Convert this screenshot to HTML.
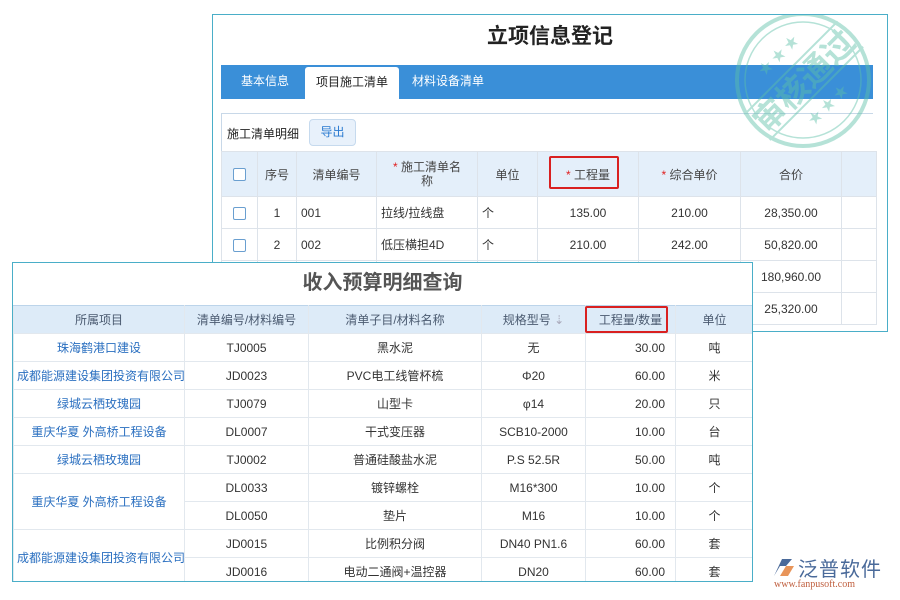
<!DOCTYPE html>
<html><head><meta charset="utf-8"><style>
*{margin:0;padding:0;box-sizing:border-box}
body{width:900px;height:600px;background:#fff;position:relative;overflow:hidden;font-family:"Liberation Sans","Noto Sans CJK SC",sans-serif;font-size:12px;color:#333}
.abs{position:absolute}
#top{left:212px;top:14px;width:676px;height:318px;border:1px solid #4aaec8;background:#fff;overflow:hidden}
#top .title{position:absolute;left:0;right:0;top:5px;text-align:center;font-size:21px;font-weight:bold;color:#222}
.tabs{position:absolute;left:8px;top:50px;width:652px;height:34px;background:#3a8fd8}
.tabs span{position:absolute;top:0;height:34px;line-height:32px;color:#fff;font-size:12px}
.tabs .act{background:#fff;color:#222;top:2px;height:32px;line-height:30px;border-radius:3px 3px 0 0;text-align:center}
.grid{position:absolute;left:8px;top:98px;width:652px;height:230px;border:1px solid #c8d8e8;border-right:none}
table{border-collapse:collapse;table-layout:fixed}
td{border:1px solid #dde3ea;text-align:center;white-space:nowrap;overflow:hidden}
.t1 td{height:32px}
.t1 tr.h td{background:#e4effa;height:45px;color:#444}
.cb{display:inline-block;width:13px;height:13px;border:1px solid #6a9fd0;border-radius:2px;vertical-align:middle;background:#fff}
.red{color:#e02020}
#bot{left:12px;top:262px;width:741px;height:320px;border:1px solid #4aaec8;background:#fff;overflow:hidden}
#bot .title{position:absolute;left:0;right:0;top:3px;text-align:center;font-size:20px;font-weight:bold;color:#555}
.t2{position:absolute;left:0;top:42px}
.t2 td{height:28px;border-color:#e2e8ee}
.t2 tr.h td{background:#ddebf8;height:28px;color:#4a5a70;border-top:1px solid #bcd4ea}
.lnk{color:#2a6fc0}
.rbox{position:absolute;border:2px solid #d92020;border-radius:2px}
</style></head><body>
<div id="top" class="abs">
 <div class="title">立项信息登记</div>
 <div class="tabs">
  <span style="left:20px">基本信息</span>
  <span class="act" style="left:84px;width:94px">项目施工清单</span>
  <span style="left:191px">材料设备清单</span>
 </div>
 <div class="grid">
  <div style="position:absolute;left:5px;top:11px;font-size:12px;color:#222">施工清单明细</div>
  <div style="position:absolute;left:87px;top:5px;width:47px;height:27px;border:1px solid #c6daee;border-radius:4px;background:#e8f1fb;color:#2a7ad0;text-align:center;line-height:25px">导出</div>
  <table class="t1" style="position:absolute;left:-1px;top:37px;width:655px">
   <colgroup><col style="width:36px"><col style="width:39px"><col style="width:80px"><col style="width:101px"><col style="width:60px"><col style="width:101px"><col style="width:102px"><col style="width:101px"><col style="width:35px"></colgroup>
   <tr class="h"><td><span class="cb"></span></td><td>序号</td><td>清单编号</td><td style="line-height:14px"><span class="red">*</span> 施工清单名<br>称</td><td>单位</td><td><span class="red">*</span> 工程量</td><td><span class="red">*</span> 综合单价</td><td>合价</td><td></td></tr>
   <tr><td><span class="cb"></span></td><td>1</td><td style="text-align:left;padding-left:4px">001</td><td style="text-align:left;padding-left:4px">拉线/拉线盘</td><td style="text-align:left;padding-left:4px">个</td><td>135.00</td><td>210.00</td><td>28,350.00</td><td></td></tr>
   <tr><td><span class="cb"></span></td><td>2</td><td style="text-align:left;padding-left:4px">002</td><td style="text-align:left;padding-left:4px">低压横担4D</td><td style="text-align:left;padding-left:4px">个</td><td>210.00</td><td>242.00</td><td>50,820.00</td><td></td></tr>
   <tr><td></td><td></td><td></td><td></td><td></td><td></td><td></td><td>180,960.00</td><td></td></tr>
   <tr><td></td><td></td><td></td><td></td><td></td><td></td><td></td><td>25,320.00</td><td></td></tr>
  </table>
 </div>
 <div class="rbox" style="left:336px;top:141px;width:70px;height:33px"></div>
 <svg style="position:absolute;left:510px;top:-10px" width="160" height="150" viewBox="0 0 160 150" opacity="0.45">
  <circle cx="80" cy="75" r="66" fill="none" stroke="#5cc0a8" stroke-width="4"/>
  <circle cx="80" cy="75" r="58" fill="none" stroke="#5cc0a8" stroke-width="1.5"/>
  <g transform="rotate(-45 80 75)">
   <line x1="14" y1="58" x2="146" y2="58" stroke="#5cc0a8" stroke-width="2"/>
   <line x1="14" y1="94" x2="146" y2="94" stroke="#5cc0a8" stroke-width="2"/>
   <text x="80" y="88" text-anchor="middle" font-size="32" font-weight="bold" fill="#5cc0a8" font-family="Noto Sans CJK SC,sans-serif">审核通过</text>
   <text x="80" y="45" text-anchor="middle" font-size="14" fill="#5cc0a8">★ ★ ★</text>
   <text x="80" y="115" text-anchor="middle" font-size="14" fill="#5cc0a8">★ ★ ★</text>
  </g>
 </svg>
</div>
<div id="bot" class="abs">
 <div class="title">收入预算明细查询</div>
 <table class="t2" style="width:740px">
  <colgroup><col style="width:171px"><col style="width:124px"><col style="width:173px"><col style="width:104px"><col style="width:90px"><col style="width:78px"></colgroup>
  <tr class="h"><td>所属项目</td><td>清单编号/材料编号</td><td>清单子目/材料名称</td><td>规格型号 <span style="color:#aab">⇣</span></td><td>工程量/数量</td><td>单位</td></tr>
  <tr><td class="lnk">珠海鹤港口建设</td><td>TJ0005</td><td>黑水泥</td><td>无</td><td style="text-align:right;padding-right:10px">30.00</td><td>吨</td></tr>
  <tr><td class="lnk" style="text-align:left;padding-left:3px">成都能源建设集团投资有限公司</td><td>JD0023</td><td>PVC电工线管杯梳</td><td>Φ20</td><td style="text-align:right;padding-right:10px">60.00</td><td>米</td></tr>
  <tr><td class="lnk">绿城云栖玫瑰园</td><td>TJ0079</td><td>山型卡</td><td>φ14</td><td style="text-align:right;padding-right:10px">20.00</td><td>只</td></tr>
  <tr><td class="lnk">重庆华夏 外高桥工程设备</td><td>DL0007</td><td>干式变压器</td><td>SCB10-2000</td><td style="text-align:right;padding-right:10px">10.00</td><td>台</td></tr>
  <tr><td class="lnk">绿城云栖玫瑰园</td><td>TJ0002</td><td>普通硅酸盐水泥</td><td>P.S 52.5R</td><td style="text-align:right;padding-right:10px">50.00</td><td>吨</td></tr>
  <tr><td class="lnk" rowspan="2">重庆华夏 外高桥工程设备</td><td>DL0033</td><td>镀锌螺栓</td><td>M16*300</td><td style="text-align:right;padding-right:10px">10.00</td><td>个</td></tr>
  <tr><td>DL0050</td><td>垫片</td><td>M16</td><td style="text-align:right;padding-right:10px">10.00</td><td>个</td></tr>
  <tr><td class="lnk" rowspan="2" style="text-align:left;padding-left:3px">成都能源建设集团投资有限公司</td><td>JD0015</td><td>比例积分阀</td><td>DN40 PN1.6</td><td style="text-align:right;padding-right:10px">60.00</td><td>套</td></tr>
  <tr><td>JD0016</td><td>电动二通阀+温控器</td><td>DN20</td><td style="text-align:right;padding-right:10px">60.00</td><td>套</td></tr>
 </table>
 <div class="rbox" style="left:572px;top:43px;width:83px;height:27px"></div>
</div>
<div class="abs" style="left:768px;top:553px;width:130px;height:40px">
 <svg width="24" height="22" style="position:absolute;left:4px;top:3px" viewBox="0 0 24 22"><path d="M2 20 L10 3 L20 3 L14 10 L8 10 Z" fill="#4a6a9a"/><path d="M8 20 L14 10 L22 10 L16 20 Z" fill="#e8955a"/></svg>
 <div style="position:absolute;left:30px;top:0;font-size:20px;color:#4a6a9a;font-family:'Noto Sans CJK SC',sans-serif;letter-spacing:1px">泛普软件</div>
 <div style="position:absolute;left:6px;top:26px;font-size:10px;color:#c06040;font-family:'Liberation Serif',serif">www.fanpusoft.com</div>
</div>
</body></html>
